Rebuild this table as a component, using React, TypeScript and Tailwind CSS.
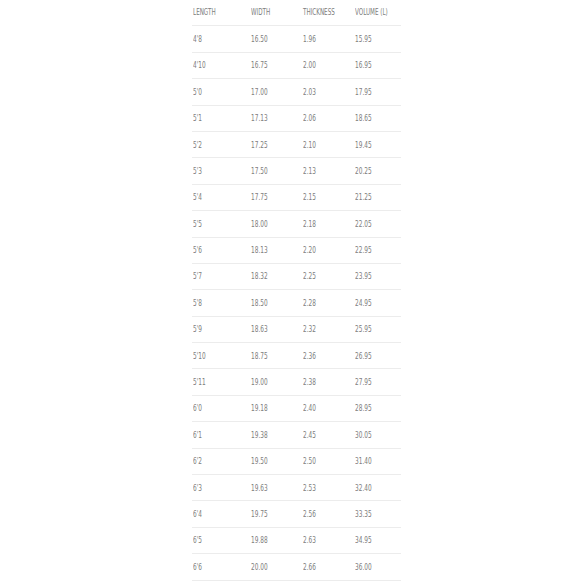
const rows: [string, string, string, string][] = [
  ["4'8", '16.50', '1.96', '15.95'],
  ["4'10", '16.75', '2.00', '16.95'],
  ["5'0", '17.00', '2.03', '17.95'],
  ["5'1", '17.13', '2.06', '18.65'],
  ["5'2", '17.25', '2.10', '19.45'],
  ["5'3", '17.50', '2.13', '20.25'],
  ["5'4", '17.75', '2.15', '21.25'],
  ["5'5", '18.00', '2.18', '22.05'],
  ["5'6", '18.13', '2.20', '22.95'],
  ["5'7", '18.32', '2.25', '23.95'],
  ["5'8", '18.50', '2.28', '24.95'],
  ["5'9", '18.63', '2.32', '25.95'],
  ["5'10", '18.75', '2.36', '26.95'],
  ["5'11", '19.00', '2.38', '27.95'],
  ["6'0", '19.18', '2.40', '28.95'],
  ["6'1", '19.38', '2.45', '30.05'],
  ["6'2", '19.50', '2.50', '31.40'],
  ["6'3", '19.63', '2.53', '32.40'],
  ["6'4", '19.75', '2.56', '33.35'],
  ["6'5", '19.88', '2.63', '34.95'],
  ["6'6", '20.00', '2.66', '36.00'],
]

const headers = ['Length', 'Width', 'Thickness', 'Volume (L)']

export default function App() {
  return (
    <div className="w-[584px] h-[584px] bg-white overflow-hidden font-['DejaVu_Sans_Condensed',sans-serif] text-[#7d7d7d]">
      <div className="ml-[192px] w-[209px]">
        {/* header */}
        <div className="grid grid-cols-[58px_52px_52px_1fr] h-[26.4px] items-center border-b border-[#ececec] text-[8px] uppercase pl-px">
          {headers.map((h) => (
            <span key={h} className="origin-left scale-x-[0.78] whitespace-nowrap">
              {h}
            </span>
          ))}
        </div>
        {rows.map((r) => (
          <div
            key={r[0]}
            className="grid grid-cols-[58px_52px_52px_1fr] h-[26.4px] items-center border-b border-[#ececec] text-[9.5px] pl-px"
          >
            {r.map((c, i) => (
              <span key={i} className="origin-left scale-x-[0.68] whitespace-nowrap">
                {c}
              </span>
            ))}
          </div>
        ))}
      </div>
    </div>
  )
}
